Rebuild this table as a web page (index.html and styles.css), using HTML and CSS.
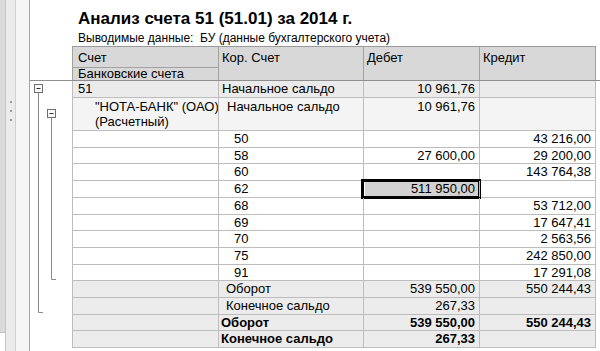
FILE: index.html
```html
<!DOCTYPE html>
<html lang="ru">
<head>
<meta charset="utf-8">
<title>Анализ счета 51</title>
<link rel="stylesheet" href="styles.css">
</head>
<body>
<div class="app">
  <aside class="gutter">
    <div class="g1"><div class="g1-fill"></div></div>
    <div class="g2"><i class="grip"></i><i class="grip"></i><i class="grip"></i></div>
    <div class="g3"></div>
  </aside>
  <main class="report">
    <h1 class="title">Анализ счета 51 (51.01) за 2014 г.</h1>
    <p class="params">Выводимые данные:&nbsp; БУ (данные бухгалтерского учета)</p>
    <div class="head-area">
      <div class="thead">
        <div class="h h-acc">Счет</div>
        <div class="h h-cor">Кор. Счет</div>
        <div class="h h-deb">Дебет</div>
        <div class="h h-cred">Кредит</div>
        <div class="h h-grp">Банковские счета</div>
      </div>
    </div>
    <div class="body-area">
      <svg class="tree" width="42" height="267" viewBox="0 0 42 267">
        <g fill="none" stroke="#8a8a8a" stroke-width="1">
          <path d="M8.5 12 V231.5 H13"/>
          <path d="M21.5 37 V198.5 H26"/>
        </g>
        <g fill="#fafafa" stroke="#6e6e6e" stroke-width="1">
          <rect x="4.5" y="3.5" width="8" height="8"/>
          <rect x="17.5" y="28.5" width="8" height="8"/>
        </g>
        <g stroke="#333" stroke-width="1">
          <path d="M6.5 7.5 H10.5"/>
          <path d="M19.5 32.5 H23.5"/>
        </g>
      </svg>
      <div class="tbody">
        <div class="row r-group">
          <div class="c c1">51</div>
          <div class="c c2">Начальное сальдо</div>
          <div class="c num">10 961,76</div>
          <div class="c num"></div>
        </div>
        <div class="row r-sub">
          <div class="c c1 sub-name">"НОТА-БАНК" (ОАО)<br>(Расчетный)</div>
          <div class="c c2 lvl2">Начальное сальдо</div>
          <div class="c num">10 961,76</div>
          <div class="c num"></div>
        </div>
        <div class="row r-item">
          <div class="c c1"></div><div class="c c2 lvl3">50</div>
          <div class="c num"></div><div class="c num">43 216,00</div>
        </div>
        <div class="row r-item">
          <div class="c c1"></div><div class="c c2 lvl3">58</div>
          <div class="c num">27 600,00</div><div class="c num">29 200,00</div>
        </div>
        <div class="row r-item">
          <div class="c c1"></div><div class="c c2 lvl3">60</div>
          <div class="c num"></div><div class="c num">143 764,38</div>
        </div>
        <div class="row r-item">
          <div class="c c1"></div><div class="c c2 lvl3">62</div>
          <div class="c num selected">511 950,00</div><div class="c num"></div>
        </div>
        <div class="row r-item">
          <div class="c c1"></div><div class="c c2 lvl3">68</div>
          <div class="c num"></div><div class="c num">53 712,00</div>
        </div>
        <div class="row r-item">
          <div class="c c1"></div><div class="c c2 lvl3">69</div>
          <div class="c num"></div><div class="c num">17 647,41</div>
        </div>
        <div class="row r-item">
          <div class="c c1"></div><div class="c c2 lvl3">70</div>
          <div class="c num"></div><div class="c num">2 563,56</div>
        </div>
        <div class="row r-item">
          <div class="c c1"></div><div class="c c2 lvl3">75</div>
          <div class="c num"></div><div class="c num">242 850,00</div>
        </div>
        <div class="row r-item">
          <div class="c c1"></div><div class="c c2 lvl3">91</div>
          <div class="c num"></div><div class="c num">17 291,08</div>
        </div>
        <div class="row r-total">
          <div class="c c1"></div><div class="c c2 lvl2b">Оборот</div>
          <div class="c num">539 550,00</div><div class="c num">550 244,43</div>
        </div>
        <div class="row r-total">
          <div class="c c1"></div><div class="c c2 lvl2b">Конечное сальдо</div>
          <div class="c num">267,33</div><div class="c num"></div>
        </div>
        <div class="row r-total bold">
          <div class="c c1"></div><div class="c c2 lvl1b">Оборот</div>
          <div class="c num">539 550,00</div><div class="c num">550 244,43</div>
        </div>
        <div class="row r-total bold">
          <div class="c c1"></div><div class="c c2 lvl1b">Конечное сальдо</div>
          <div class="c num">267,33</div><div class="c num"></div>
        </div>
      </div>
    </div>
  </main>
</div>
</body>
</html>
```
FILE: styles.css
```css
html, body {
  margin: 0;
  padding: 0;
  background: #fff;
}
body {
  font-family: "Liberation Sans", Arial, sans-serif;
  color: #000;
  font-size: 13px;
}
.app {
  display: flex;
  width: 600px;
  height: 351px;
  overflow: hidden;
}

/* left splitter gutter */
.gutter {
  display: flex;
  flex: 0 0 auto;
  height: 351px;
}
.g1 {
  width: 5px;
  border-right: 1px solid #c6c6c6;
  display: flex;
  flex-direction: column;
}
.g1-fill {
  height: 332px;
  background: #dadada;
  border-bottom: 1px solid #c0c0c0;
}
.g2 {
  width: 10px;
  background: #ebebeb;
  border-right: 1px solid #d0d0d0;
  display: flex;
  flex-direction: column;
  align-items: center;
  gap: 7px;
  padding-top: 101px;
  box-sizing: border-box;
}
.grip {
  display: block;
  width: 2px;
  height: 2px;
  background: #9a9a9a;
}
.g3 {
  width: 13px;
  background: #f6f6f6;
  border-right: 1px solid #a4a4a4;
}

/* report */
.report {
  flex: 1 1 auto;
  display: flex;
  flex-direction: column;
  min-width: 0;
}
.title {
  margin: 0;
  padding: 7px 0 0 48px;
  height: 23px;
  font-size: 17px;
  line-height: 23px;
  font-weight: bold;
  color: #000;
  white-space: nowrap;
}
.params {
  margin: 0;
  padding: 0 0 0 48px;
  height: 16px;
  font-size: 12px;
  line-height: 16px;
  color: #000;
  white-space: nowrap;
}

.head-area {
  padding-left: 42px;
}
.thead {
  display: grid;
  grid-template-columns: 146px 145px 116px 117px;
  grid-template-rows: 21px 12px;
  width: 524px;
  border-top: 1px solid #9a9a9a;
  background: #d8d8d8;
}
.h {
  box-sizing: border-box;
  border-left: 1px solid #a2a2a2;
  padding: 2px 0 0 3px;
  line-height: 15px;
  white-space: nowrap;
}
.h-acc {
  grid-column: 1;
  grid-row: 1;
  border-bottom: 1px solid #a2a2a2;
  padding-left: 5px;
  padding-top: 3px;
}
.h-grp {
  grid-column: 1;
  grid-row: 2;
  padding-left: 5px;
  padding-top: 0;
  line-height: 12px;
}
.h-cor { grid-column: 2; grid-row: 1 / span 2; padding-top: 3px; }
.h-deb { grid-column: 3; grid-row: 1 / span 2; padding-top: 3px; }
.h-cred {
  grid-column: 4;
  grid-row: 1 / span 2;
  border-right: 1px solid #a2a2a2;
  padding-top: 3px;
}

.body-area {
  display: flex;
  border-top: 1px solid #8e8e8e;
  align-items: flex-start;
}
.tree {
  display: block;
  flex: 0 0 42px;
}
.tbody {
  width: 524px;
}
.row {
  display: grid;
  grid-template-columns: 146px 145px 116px 117px;
  height: 16.7px;
  box-sizing: border-box;
  border-bottom: 1px solid #bdbdbd;
}
.c {
  box-sizing: border-box;
  border-left: 1px solid #bdbdbd;
  line-height: 15.7px;
  white-space: nowrap;
  overflow: visible;
}
.c:last-child {
  border-right: 1px solid #bdbdbd;
}
.c1 { padding-left: 5px; }
.c2 { padding-left: 3px; }
.lvl2 { padding-left: 8px; }
.lvl3 { padding-left: 15px; }
.lvl2b { padding-left: 7px; }
.lvl1b { padding-left: 2px; }
.num {
  text-align: right;
  padding-right: 4px;
}
.r-group { background: #ebebeb; }
.r-sub {
  background: #f4f4f4;
  height: 33.4px;
}
.r-sub .c { line-height: 15.5px; padding-top: 1px; }
.sub-name { padding-left: 22px; }
.r-item { background: #fff; }
.r-total { background: #ececec; }
.bold .c { font-weight: bold; }

.selected {
  background: #d2d2d2;
  box-shadow: inset 0 0 0 1px #fff;
  outline: 3px solid #000;
  outline-offset: -1px;
}
```
